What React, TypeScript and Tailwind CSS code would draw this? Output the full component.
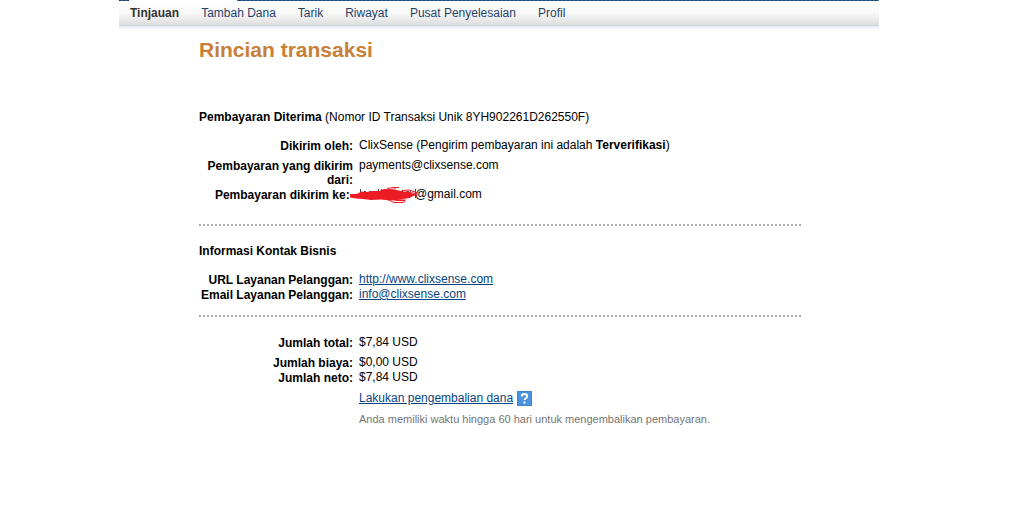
import React from 'react';

const NAV_ITEMS = ['Tinjauan', 'Tambah Dana', 'Tarik', 'Riwayat', 'Pusat Penyelesaian', 'Profil'];

interface RowProps {
    label: React.ReactNode;
    spaced?: boolean;
    children: React.ReactNode;
}

const Row: React.FC<RowProps> = ({ label, spaced = false, children }) => (
    <tr className="align-top">
        <th scope="row" className={`w-[154px] text-right font-bold leading-[14px] ${spaced ? 'pb-[6px]' : 'pb-px'}`}>
            {label}
        </th>
        <td className="p-0 pl-[6px] leading-[12px]">{children}</td>
    </tr>
);

const Divider = () => (
    <div className="h-[2px] bg-[repeating-linear-gradient(90deg,#aaaaaa_0px,#aaaaaa_2px,transparent_2px,transparent_4px)]" />
);

const Scribble = () => (
    <span className="relative inline-block h-2 w-14">
        <svg className="absolute -left-[9px] -top-[5px] h-5 w-[70px]" viewBox="0 0 70 20" fill="none" aria-hidden="true">
            <path d="M10.500 4v5M28.500 4v4M31.500 4v4M65.500 4v9" stroke="#444444" />
            <path d="M14 6.500h3M19 6.500h4M51 6.500h3M57 6.500h4" stroke="#444444" strokeDasharray="2 1" />
            <path
                d="M3 9.500l5-1 3-2 6 .5 5-1h7l5-2 7 1h6l5 1.500h6l4 2 6 1.500-5 1-3 2-7 1-5 1-8 .5-9-1-10 .5-8-1-7-.5-6-1-3-1.500z"
                fill="#ed1c24"
            />
            <path
                d="M0 9.500h8M37 3.500l6-1h6M34 5l12-1M39 12l5 3h12M43 13l-5 1.500 6 3h9l2-1.500M46 15.500h9M52 5.500l7-.5 9 3M56 7l10 1.500M58 11l9-1.500"
                stroke="#ed1c24"
            />
        </svg>
    </span>
);

const HelpIcon = () => (
    <svg className="h-[15px] w-[15px]" viewBox="0 0 15 15" aria-hidden="true">
        <rect x="0.5" y="0.5" width="14" height="14" fill="#4a94dd" stroke="#3f86cc" />
        <path d="M4.800 5.500c0-3.200 5.400-3.200 5.400 0 0 1.800-2.700 1.700-2.700 3.600M7.500 10.500v2" fill="none" stroke="#ffffff" strokeWidth="2" />
    </svg>
);

const App = () => {
    return (
        <div className="bg-white pr-5 font-['Liberation_Sans',Arial,sans-serif] text-[12px] text-[#222222]">
            <div className="mx-auto max-w-[760px]">
                <header>
                    <div className="flex h-px bg-[repeating-linear-gradient(90deg,#123c6b_0px,#123c6b_2px,#3a6795_2px,#3a6795_4px)] pl-[10px]">
                        <div className="w-[108px] bg-white" />
                    </div>
                    <nav className="h-6 bg-linear-to-b from-white via-[#f8f8f8] to-[#dedede] pl-[11px]">
                        <ul className="flex gap-[22px] leading-6">
                            {NAV_ITEMS.map((item, i) => (
                                <li key={item}>
                                    <a href="#" className={i === 0 ? 'font-bold text-[#333333]' : 'text-[#1f4269]'}>
                                        {item}
                                    </a>
                                </li>
                            ))}
                        </ul>
                    </nav>
                    <div className="h-px bg-[#cdd6e3]" />
                    <div className="h-1 bg-linear-to-b from-[#e3eaf5] to-white" />
                </header>

                <main className="pl-20 pr-[78px]">
                    <h1 className="pt-[7px] text-[21px] font-bold leading-[26px] text-[#c88039]">Rincian transaksi</h1>

                    <p className="pt-[47px] leading-[15px] text-black">
                        <strong>Pembayaran Diterima</strong> (Nomor ID Transaksi Unik 8YH902261D262550F)
                    </p>
                    <table className="mt-[14px] w-full text-black">
                        <tbody>
                            <Row label="Dikirim oleh:" spaced>
                                ClixSense (Pengirim pembayaran ini adalah <strong>Terverifikasi</strong>)
                            </Row>
                            <Row label="Pembayaran yang dikirim dari:">payments@clixsense.com</Row>
                            <Row label={<>Pembayaran dikirim ke:&nbsp;</>}>
                                <Scribble />
                                @gmail.com
                            </Row>
                        </tbody>
                    </table>

                    <div className="pb-[18px] pt-[21px]">
                        <Divider />
                    </div>

                    <h2 className="font-bold leading-[15px] text-black">Informasi Kontak Bisnis</h2>
                    <table className="mt-[14px] w-full text-black">
                        <tbody>
                            <Row label="URL Layanan Pelanggan:">
                                <a href="#" className="text-[#084482] underline">http://www.clixsense.com</a>
                            </Row>
                            <Row label="Email Layanan Pelanggan:">
                                <a href="#" className="text-[#084482] underline">info@clixsense.com</a>
                            </Row>
                        </tbody>
                    </table>

                    <div className="pb-[19px] pt-[12px]">
                        <Divider />
                    </div>

                    <table className="w-full text-black">
                        <tbody>
                            <Row label="Jumlah total:" spaced>$7,84 USD</Row>
                            <Row label="Jumlah biaya:">$0,00 USD</Row>
                            <Row label="Jumlah neto:">$7,84 USD</Row>
                        </tbody>
                    </table>
                    <div className="pl-[160px] pt-[5px]">
                        <div className="flex items-center gap-1 leading-[15px]">
                            <a href="#" className="text-[#084482] underline">Lakukan pengembalian dana</a>
                            <button type="button" aria-label="Bantuan">
                                <HelpIcon />
                            </button>
                        </div>
                        <p className="pt-[6px] text-[11px] leading-[15px] text-[#757575]">
                            Anda memiliki waktu hingga 60 hari untuk mengembalikan pembayaran.
                        </p>
                    </div>
                </main>
            </div>
        </div>
    );
};

export default App;
